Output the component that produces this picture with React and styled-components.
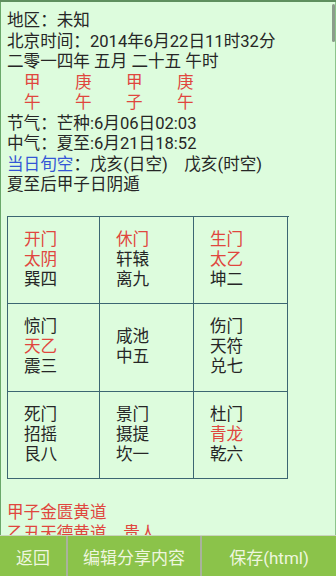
import React from 'react';
import styled, { createGlobalStyle } from 'styled-components';

const GlobalStyle = createGlobalStyle`
  html, body {
    margin: 0;
    padding: 0;
    background: #ddfcdd;
  }
  body {
    font-family: 'Roboto', 'Noto Sans CJK SC', sans-serif;
    overflow: hidden;
  }
`;

const Screen = styled.div`
  width: 336px;
  height: 576px;
  box-sizing: border-box;
  display: flex;
  flex-direction: column;
  overflow: hidden;
  background: #ddfcdd;
  border-top: 2px solid #5f8f5f;
`;

const ScrollArea = styled.div`
  position: relative;
  flex: 1;
  min-height: 0;
  overflow: hidden;
  border-left: 1px solid #6aa86a;
  border-right: 1px solid #8cc48c;
`;

const Content = styled.div`
  padding: 9px 0 0 6px;
  font-size: 16.6px;
  line-height: 20.5px;
  color: #262626;
`;

const Line = styled.div`
  white-space: nowrap;
`;

const Blue = styled.span`
  color: #3456d6;
`;

const GanzhiRow = styled.div`
  display: flex;
  color: #e0463e;
  padding-left: 17px;
`;

const Ganzhi = styled.span`
  width: 51px;
`;

const Board = styled.div`
  margin-top: 20px;
  width: 281px;
  display: grid;
  grid-template-columns: 92px 94px 94px;
  grid-auto-rows: 87.5px;
  border-top: 1px solid #3c6672;
  border-left: 1px solid #3c6672;
`;

const Cell = styled.div`
  display: flex;
  flex-direction: column;
  justify-content: center;
  padding-left: 16px;
  border-right: 1px solid #3c6672;
  border-bottom: 1px solid #3c6672;
  line-height: 20px;
`;

const CellLine = styled.div`
  color: ${p => (p.$red ? '#e0463e' : '#262626')};
`;

const Notes = styled.div`
  margin-top: 24px;
  color: #e0463e;
`;

const Scrollbar = styled.div`
  position: absolute;
  right: 0;
  top: 2px;
  width: 3px;
  height: 38px;
  border-radius: 2px;
  background: #8c9c8c;
`;

const ButtonBar = styled.div`
  flex: none;
  height: 40px;
  display: flex;
  gap: 2px;
  background: #a9b39c;
  border-top: 1px solid #c9d4bd;
`;

const BarButton = styled.div`
  width: ${p => p.$w}px;
  flex: ${p => (p.$grow ? 1 : 'none')};
  display: flex;
  align-items: center;
  justify-content: center;
  background: #8bc34a;
  color: #eef6df;
  font-size: 17px;
`;

const cells = [
  [['开门', true], ['太阴', true], ['巽四']],
  [['休门', true], ['轩辕'], ['离九']],
  [['生门', true], ['太乙', true], ['坤二']],
  [['惊门'], ['天乙', true], ['震三']],
  [['咸池'], ['中五']],
  [['伤门'], ['天符'], ['兑七']],
  [['死门'], ['招摇'], ['艮八']],
  [['景门'], ['摄提'], ['坎一']],
  [['杜门'], ['青龙', true], ['乾六']],
];

export default function App() {
  return (
    <Screen>
      <GlobalStyle />
      <ScrollArea>
        <Content>
          <Line>地区：未知</Line>
          <Line>北京时间：2014年6月22日11时32分</Line>
          <Line>二零一四年 五月 二十五 午时</Line>
          <GanzhiRow>
            <Ganzhi>甲</Ganzhi>
            <Ganzhi>庚</Ganzhi>
            <Ganzhi>甲</Ganzhi>
            <Ganzhi>庚</Ganzhi>
          </GanzhiRow>
          <GanzhiRow>
            <Ganzhi>午</Ganzhi>
            <Ganzhi>午</Ganzhi>
            <Ganzhi>子</Ganzhi>
            <Ganzhi>午</Ganzhi>
          </GanzhiRow>
          <Line>节气：芒种:6月06日02:03</Line>
          <Line>中气：夏至:6月21日18:52</Line>
          <Line>
            <Blue>当日旬空</Blue>：戊亥(日空)&nbsp;&nbsp;&nbsp;&nbsp;戊亥(时空)
          </Line>
          <Line>夏至后甲子日阴遁</Line>
          <Board>
            {cells.map((c, i) => (
              <Cell key={i}>
                {c.map(([t, red]) => (
                  <CellLine key={t} $red={red}>{t}</CellLine>
                ))}
              </Cell>
            ))}
          </Board>
          <Notes>
            <Line>甲子金匮黄道</Line>
            <Line>乙丑天德黄道，贵人</Line>
          </Notes>
        </Content>
        <Scrollbar />
      </ScrollArea>
      <ButtonBar>
        <BarButton $w={66}>返回</BarButton>
        <BarButton $w={132}>编辑分享内容</BarButton>
        <BarButton $grow>保存(html)</BarButton>
      </ButtonBar>
    </Screen>
  );
}
